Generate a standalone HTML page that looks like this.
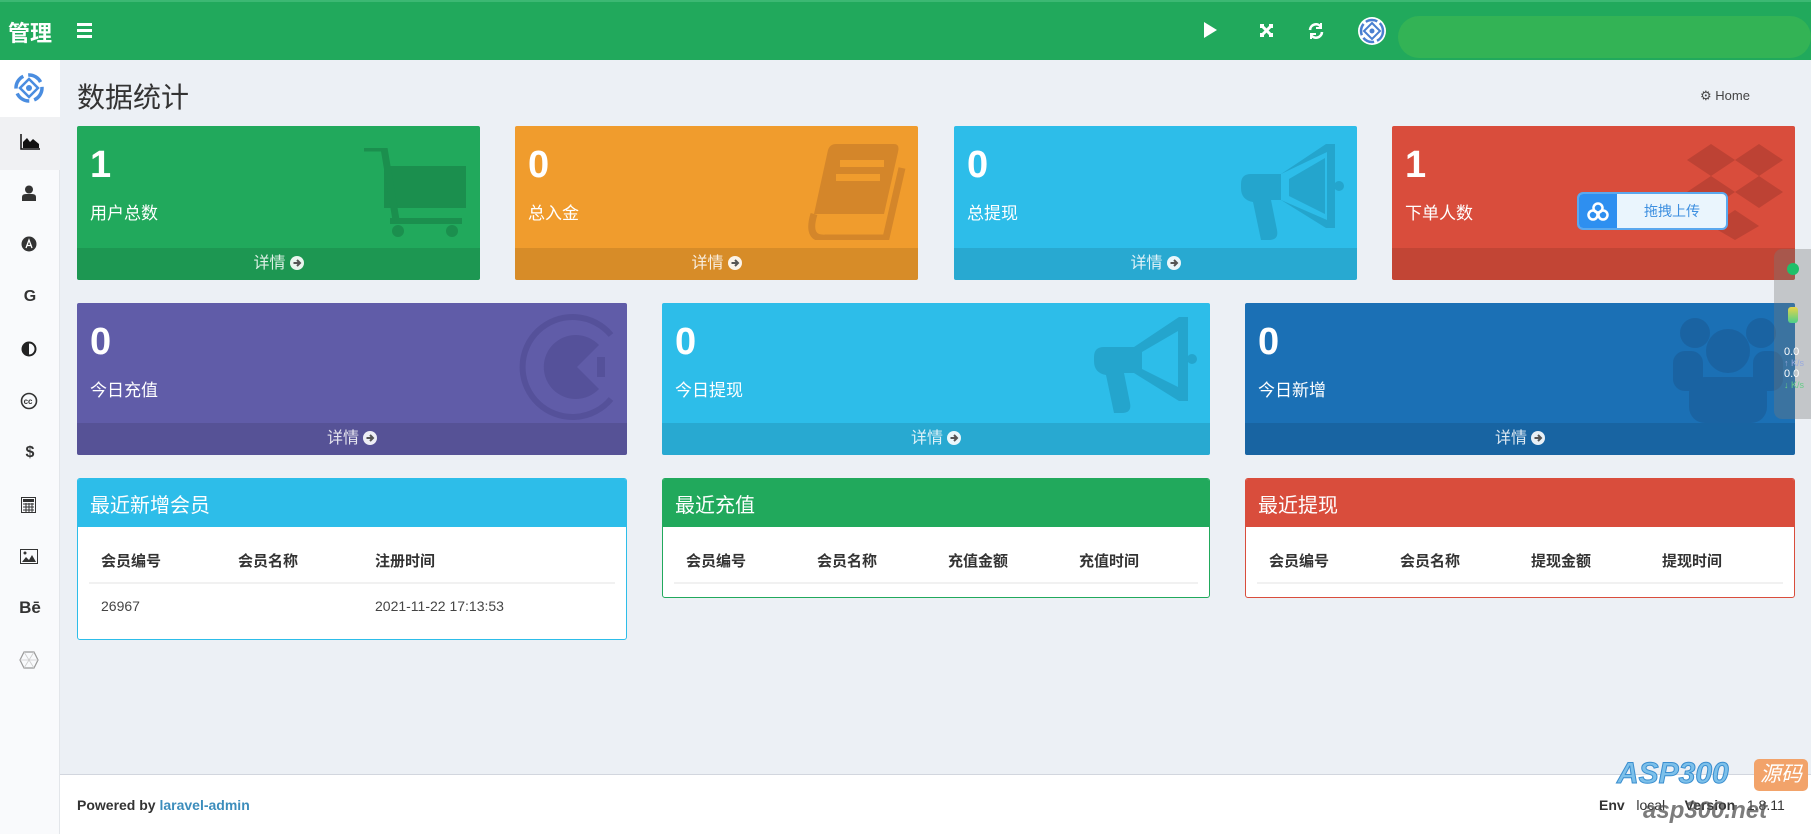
<!DOCTYPE html>
<html><head><meta charset="utf-8">
<style>
*{box-sizing:border-box;margin:0;padding:0}
body{width:1811px;height:834px;overflow:hidden;background:#ecf0f5;font-family:"Liberation Sans","Noto Sans CJK SC",sans-serif;position:relative;color:#333}
.hdr{position:absolute;left:0;top:0;width:1811px;height:60px;background:#21a95c;border-top:2px solid #3cb873}
.brand{position:absolute;left:8px;top:14px;color:#fff;font-size:22px;font-weight:bold}
.ham{position:absolute;left:77px;top:21px;width:15px}
.ham i{display:block;height:3px;background:#fff;margin-bottom:3px}
.blob{position:absolute;left:1398px;top:14px;width:413px;height:42px;background:#33b355;border-radius:21px}
.side{position:absolute;left:0;top:60px;width:60px;height:774px;background:#f9fafc;border-right:1px solid #e3e6ea}
.side .ic{position:absolute;left:0;width:60px;text-align:center;font-size:16px;color:#333;font-weight:bold}
.title{position:absolute;left:77px;top:76px;font-size:28px;color:#333}
.home{position:absolute;left:1700px;top:88px;font-size:13px;color:#444}
.box{position:absolute;border-radius:2px;color:#fff;overflow:hidden}
.box .n{position:absolute;left:13px;top:18px;font-size:38px;font-weight:bold}
.box .l{position:absolute;left:13px;top:73px;font-size:17px}
.box .f{position:absolute;left:0;right:0;bottom:0;height:32px;background:rgba(0,0,0,.1);text-align:center;font-size:16px;line-height:32px;color:rgba(255,255,255,.85)}
.box .f svg{vertical-align:-2px;margin-left:4px}
.box .bg{position:absolute;right:12px;top:18px}
.pnl{position:absolute;background:#fff;border:1px solid;border-radius:3px;overflow:hidden}
.pnl .h{height:48px;color:#fff;font-size:20px;padding:10px 12px}
.pnl table{margin:12px 11px 0;width:calc(100% - 22px);border-collapse:collapse;font-size:15px}
.pnl th{text-align:left;font-weight:bold;padding:9px 12px;height:44px;border-bottom:2px solid #f1f1f1}
.pnl td{padding:10px 12px;font-size:14px;color:#444;height:44px}
.foot{position:absolute;left:60px;top:774px;width:1751px;height:60px;background:#fff;border-top:1px solid #d2d6de;font-size:14px}
</style></head><body>
<svg width="0" height="0" style="position:absolute"><defs><symbol id="arr" viewBox="0 0 14 14"><circle cx="7" cy="7" r="7" fill="rgba(255,255,255,.9)"/><path d="M3.5 7H10M7 4L10 7L7 10" stroke="#555" stroke-width="2" fill="none"/></symbol></defs></svg>
<div class="hdr">
<div class="brand">管理</div>
<div class="ham"><i></i><i></i><i></i></div>
<svg style="position:absolute;left:1203px;top:20px" width="14" height="16"><path d="M1 0L14 8L1 16Z" fill="#fff"/></svg>
<svg style="position:absolute;left:1259px;top:21px" width="15" height="15" stroke="#fff" stroke-width="3" fill="none"><path d="M2 2L13 13M13 2L2 13"/><path d="M1 1h4v4H1zM10 1h4v4h-4zM1 10h4v4H1zM10 10h4v4h-4z" fill="#fff" stroke="none"/></svg>
<svg style="position:absolute;left:1308px;top:21px" width="16" height="16" fill="none" stroke="#fff" stroke-width="2.6"><path d="M2 7A6 6 0 0 1 13 4M14 9A6 6 0 0 1 3 12"/><path d="M13 0v5h-5M3 16v-5h5" stroke-width="2"/></svg>
<svg style="position:absolute;left:1357px;top:14px" width="30" height="30"><circle cx="15" cy="15" r="14" fill="#fff"/><circle cx="15" cy="15" r="11" fill="none" stroke="#4a7fd0" stroke-width="2.5" stroke-dasharray="12 3"/><path d="M15 7L23 15L15 23L7 15Z" fill="none" stroke="#4a7fd0" stroke-width="2"/><circle cx="15" cy="15" r="2.5" fill="#4a7fd0"/></svg>
<div class="blob"></div>
</div>
<div class="side">
<div style="position:absolute;left:0;top:0;width:60px;height:57px;background:#fff"></div>
<svg style="position:absolute;left:13px;top:12px" width="32" height="32"><circle cx="16" cy="16" r="13" fill="none" stroke="#4a8de0" stroke-width="3.5" stroke-dasharray="15 5"/><path d="M16 7L25 16L16 25L7 16Z" fill="none" stroke="#4a8de0" stroke-width="2.5"/><circle cx="16" cy="16" r="3" fill="#4a8de0"/></svg>
<div style="position:absolute;left:0;top:57px;width:60px;height:53px;background:#f0f1f3"></div>
<svg style="position:absolute;left:20px;top:74px" width="20" height="16"><path d="M1 0V15H20" stroke="#111" stroke-width="1.5" fill="none"/><path d="M3 14L3 8L7 4L10 8L13 5L19 10V14Z" fill="#111"/></svg>
<svg style="position:absolute;left:22px;top:125px" width="14" height="16"><circle cx="7" cy="4.5" r="4" fill="#333"/><path d="M0 16V12Q0 9 4 9H10Q14 9 14 12V16Z" fill="#333"/></svg>
<svg style="position:absolute;left:21px;top:176px" width="16" height="16"><circle cx="8" cy="8" r="7.5" fill="#333"/><path d="M5 12L8 4L11 12M6 9.5H10" stroke="#fff" stroke-width="1.3" fill="none"/></svg>
<div class="ic" style="top:228px">G</div>
<svg style="position:absolute;left:21px;top:281px" width="16" height="16"><circle cx="8" cy="8" r="6.5" fill="none" stroke="#222" stroke-width="2"/><path d="M8 1.5A6.5 6.5 0 0 0 8 14.5Z" fill="#222"/></svg>
<svg style="position:absolute;left:20px;top:332px" width="18" height="18"><circle cx="9" cy="9" r="7.5" fill="none" stroke="#333" stroke-width="1.6"/><text x="3.6" y="12" font-size="8" font-weight="bold" fill="#333" font-family="Liberation Sans">cc</text></svg>
<div class="ic" style="top:384px">$</div>
<svg style="position:absolute;left:21px;top:437px" width="15" height="16"><rect x="0.5" y="0.5" width="14" height="15" fill="none" stroke="#333"/><rect x="2" y="2" width="11" height="3" fill="#333"/><path d="M2 7h11M2 10h11M2 13h11M5 6v9M8 6v9M11 6v9" stroke="#333"/></svg>
<svg style="position:absolute;left:20px;top:489px" width="18" height="15"><rect x="0.5" y="0.5" width="17" height="14" fill="none" stroke="#333"/><path d="M2 13L6 8L9 11L12 6L16 13Z" fill="#333"/><circle cx="5" cy="4" r="1.5" fill="#333"/></svg>
<div class="ic" style="top:538px;font-size:17px">Bē</div>
<svg style="position:absolute;left:19px;top:591px" width="20" height="18"><path d="M5 1H15L19 9L15 17H5L1 9Z" fill="none" stroke="#999" stroke-width="1.2"/><path d="M5 1L15 17M15 1L5 17M1 9H19" stroke="#ccc" stroke-width=".8"/></svg>
</div>
<div class="title">数据统计</div>
<div class="home">⚙ Home</div>

<div class="box" style="left:77px;top:126px;width:403px;height:154px;background:#21a95c">
<svg class="bg" style="right:12px;top:22px" width="104" height="90"><rect x="20" y="18" width="82" height="42" fill="#1b8f4e"/><rect x="26" y="70" width="72" height="6" fill="#1b8f4e"/><circle cx="34" cy="83" r="6" fill="#1b8f4e"/><circle cx="88" cy="83" r="6" fill="#1b8f4e"/><path d="M0 0H20L32 72" stroke="#1b8f4e" stroke-width="7" fill="none"/></svg>
<div class="n">1</div><div class="l">用户总数</div><div class="f">详情<svg width="14" height="14"><use href="#arr"/></svg></div></div>
<div class="box" style="left:515px;top:126px;width:403px;height:154px;background:#f09c2d">
<svg class="bg" style="right:12px;top:18px" width="100" height="96"><path d="M22 6Q24 0 30 0H88Q94 0 92 8L78 70H8Z" fill="#d4862a"/><path d="M8 70Q0 96 20 94H80L96 24" stroke="#d4862a" stroke-width="7" fill="none"/><rect x="34" y="16" width="44" height="7" fill="#f09c2d"/><rect x="30" y="30" width="44" height="7" fill="#f09c2d"/></svg>
<div class="n">0</div><div class="l">总入金</div><div class="f">详情<svg width="14" height="14"><use href="#arr"/></svg></div></div>
<div class="box" style="left:954px;top:126px;width:403px;height:154px;background:#2dbde9">
<svg class="bg" style="right:12px;top:18px" width="104" height="96"><path d="M10 30H40L85 0H94V84H85L40 56H30L36 86Q38 96 28 96H20L12 58Q0 56 0 44V40Q0 30 10 30Z" fill="#24a5cd"/><path d="M40 30L86 8V76L40 56Z" fill="#2dbde9"/><path d="M48 35L84 14V70L48 52Z" fill="#24a5cd"/><circle cx="98" cy="42" r="5" fill="#24a5cd"/></svg>
<div class="n">0</div><div class="l">总提现</div><div class="f">详情<svg width="14" height="14"><use href="#arr"/></svg></div></div>
<div class="box" style="left:1392px;top:126px;width:403px;height:154px;background:#d94d3c">
<svg class="bg" style="right:12px;top:18px" width="96" height="96"><path d="M24 0L48 16L24 32L0 16ZM72 0L96 16L72 32L48 16ZM24 32L48 48L24 64L0 48ZM72 32L96 48L72 64L48 48ZM48 66L72 82L48 96L24 82Z" fill="#bd4234"/></svg>
<div class="n">1</div><div class="l">下单人数</div><div class="f"></div>
<div style="position:absolute;left:185px;top:66px;width:151px;height:38px;border-radius:6px;background:#eaf5fd;border:2px solid #5ba8ee;overflow:hidden">
<div style="position:absolute;left:0;top:0;width:38px;height:36px;background:#2e8ff0"></div>
<svg style="position:absolute;left:8px;top:8px" width="22" height="20"><circle cx="11" cy="6" r="4.5" fill="none" stroke="#fff" stroke-width="2.5"/><circle cx="6" cy="13" r="4.5" fill="none" stroke="#fff" stroke-width="2.5"/><circle cx="16" cy="13" r="4.5" fill="none" stroke="#fff" stroke-width="2.5"/></svg>
<div style="position:absolute;left:38px;top:0;width:110px;line-height:34px;text-align:center;color:#3d8fe0;font-size:14px">拖拽上传</div></div>
</div>

<div class="box" style="left:77px;top:303px;width:550px;height:152px;background:#605ca8">
<svg class="bg" style="right:12px;top:8px" width="100" height="112"><path d="M96 24A50 50 0 1 0 96 88" stroke="#55519a" stroke-width="6" fill="none"/><path d="M84 34A32 32 0 1 0 84 78L62 56Z" fill="#55519a"/><rect x="82" y="46" width="8" height="20" fill="#55519a"/></svg>
<div class="n">0</div><div class="l">今日充值</div><div class="f">详情<svg width="14" height="14"><use href="#arr"/></svg></div></div>
<div class="box" style="left:662px;top:303px;width:548px;height:152px;background:#2dbde9">
<svg class="bg" style="right:12px;top:14px" width="104" height="96"><path d="M10 30H40L85 0H94V84H85L40 56H30L36 86Q38 96 28 96H20L12 58Q0 56 0 44V40Q0 30 10 30Z" fill="#24a5cd"/><path d="M48 35L84 14V70L48 52Z" fill="#2dbde9"/><circle cx="98" cy="42" r="5" fill="#24a5cd"/></svg>
<div class="n">0</div><div class="l">今日提现</div><div class="f">详情<svg width="14" height="14"><use href="#arr"/></svg></div></div>
<div class="box" style="left:1245px;top:303px;width:550px;height:152px;background:#1b70b5">
<svg class="bg" style="right:12px;top:10px" width="110" height="110"><circle cx="22" cy="20" r="15" fill="#1a63a2"/><circle cx="88" cy="20" r="15" fill="#1a63a2"/><rect x="0" y="38" width="30" height="40" rx="12" fill="#1a63a2"/><rect x="80" y="38" width="30" height="40" rx="12" fill="#1a63a2"/><circle cx="55" cy="38" r="22" fill="#1a63a2"/><rect x="16" y="64" width="78" height="46" rx="16" fill="#1a63a2"/></svg>
<div class="n">0</div><div class="l">今日新增</div><div class="f">详情<svg width="14" height="14"><use href="#arr"/></svg></div></div>

<div style="position:absolute;left:1774px;top:249px;width:37px;height:170px;background:rgba(120,120,120,.35);border-radius:8px 0 0 8px">
<div style="position:absolute;left:13px;top:14px;width:12px;height:12px;border-radius:50%;background:#1fc06a"></div>
<div style="position:absolute;left:14px;top:58px;width:10px;height:16px;border-radius:3px;background:linear-gradient(#e8d44a,#4cd08a)"></div>
<div style="position:absolute;left:10px;top:98px;color:#fff;font-size:11px;line-height:11px">0.0<br><span style="font-size:9px;color:#9ad">↑ K/s</span><br>0.0<br><span style="font-size:9px;color:#6c8">↓ K/s</span></div>
</div>

<div class="pnl" style="left:77px;top:478px;width:550px;height:162px;border-color:#2dbde9">
<div class="h" style="background:#2dbde9">最近新增会员</div>
<table><tr><th style="width:137px">会员编号</th><th style="width:137px">会员名称</th><th>注册时间</th></tr>
<tr><td>26967</td><td></td><td>2021-11-22 17:13:53</td></tr></table></div>
<div class="pnl" style="left:662px;top:478px;width:548px;height:120px;border-color:#21a95c">
<div class="h" style="background:#21a95c">最近充值</div>
<table><tr><th style="width:131px">会员编号</th><th style="width:131px">会员名称</th><th style="width:131px">充值金额</th><th>充值时间</th></tr></table></div>
<div class="pnl" style="left:1245px;top:478px;width:550px;height:120px;border-color:#d94d3c">
<div class="h" style="background:#d94d3c">最近提现</div>
<table><tr><th style="width:131px">会员编号</th><th style="width:131px">会员名称</th><th style="width:131px">提现金额</th><th>提现时间</th></tr></table></div>

<div class="foot">
<div style="position:absolute;left:17px;top:22px"><b>Powered by</b> <b style="color:#3c8dbc">laravel-admin</b></div>
<div style="position:absolute;left:1539px;top:22px"><b>Env</b>&nbsp;&nbsp; local&nbsp;&nbsp;&nbsp;&nbsp; <b>Version</b>&nbsp;&nbsp; 1.8.11</div>
</div>
<div style="position:absolute;left:1617px;top:757px;font-size:30px;font-weight:bold;font-style:italic;color:#7cc0ea;-webkit-text-stroke:1px #3a8ecf">ASP300</div>
<div style="position:absolute;left:1754px;top:759px;width:54px;height:32px;border-radius:5px;background:#f2a36a;color:#fff;font-size:21px;text-align:center;line-height:32px;font-style:italic">源码</div>
<div style="position:absolute;left:1643px;top:797px;font-size:24px;font-style:italic;font-weight:bold;color:rgba(80,80,80,.75)">asp300.net</div>
</body></html>
